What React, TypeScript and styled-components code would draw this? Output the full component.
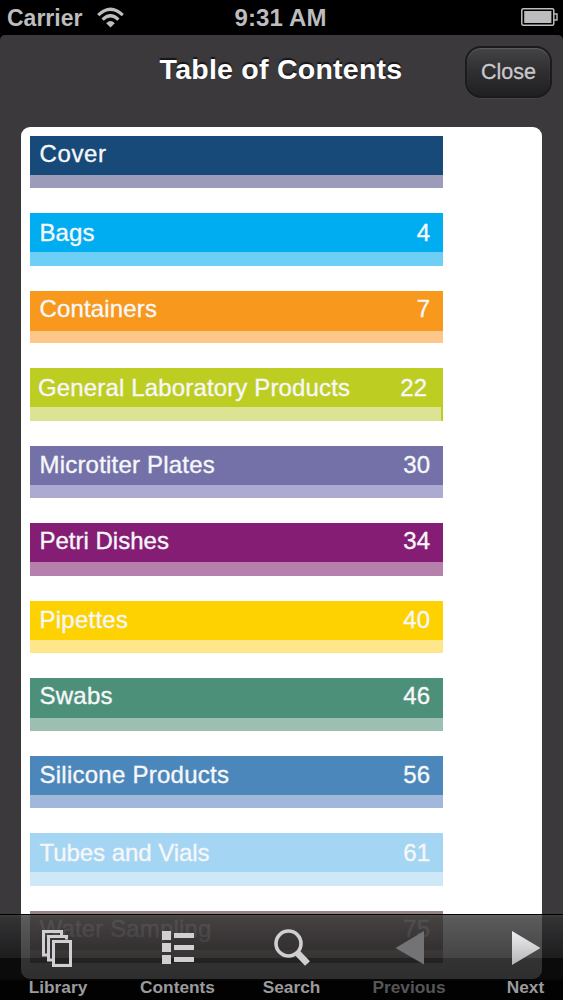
import React from 'react';
import styled, { createGlobalStyle } from 'styled-components';

const GlobalStyle = createGlobalStyle`
  * { box-sizing: border-box; }
  body { margin: 0; background: #000; font-family: "Liberation Sans", Arial, sans-serif; }
`;

const Screen = styled.div`
  position: relative;
  width: 563px;
  height: 1000px;
  overflow: hidden;
  background: #000;
  display: flex;
  flex-direction: column;
`;

const StatusBar = styled.header`
  height: 35px;
  flex: none;
  display: grid;
  grid-template-columns: 1fr auto 1fr;
  align-items: center;
  padding: 1px 5px 0 7px;
  color: #bdbcbe;
  font-size: 23px;
  font-weight: 700;
  line-height: 34px;
`;

const Carrier = styled.div`
  display: flex;
  align-items: center;
  gap: 15px;
  svg { margin-bottom: 2px; }
`;

const Clock = styled.span`
  font-size: 24px;
  letter-spacing: 0.15px;
  margin-right: 4px;
`;

const Battery = styled.div`
  display: flex;
  justify-content: flex-end;
  padding-bottom: 3px;
`;

const Page = styled.main`
  flex: 1;
  min-height: 0;
  background: #3b393c;
  border-radius: 5px 5px 0 0;
  display: flex;
  flex-direction: column;
`;

const TitleBar = styled.div`
  height: 91.5px;
  flex: none;
  display: grid;
  grid-template-columns: 1fr auto 1fr;
  align-items: start;
  padding: 10px 11px 0 10px;
`;

const Title = styled.h1`
  grid-column: 2;
  margin: 7px 0 0;
  font-size: 28.5px;
  line-height: 34px;
  letter-spacing: 0.25px;
  color: #fff;
  text-shadow: 0 -2px 1px #161517;
  white-space: nowrap;
`;

const CloseButton = styled.button`
  justify-self: end;
  width: 87px;
  height: 52px;
  margin-top: 1px;
  padding: 0;
  border: 2px solid #1b1a1c;
  border-radius: 16px;
  background: linear-gradient(#444345, #2f2e30 48%, #201f21);
  box-shadow: inset 0 1px 1px #5f5e60, 0 1px 0 #464447;
  color: #c9c8ca;
  font: 21.5px/47px "Liberation Sans", Arial, sans-serif;
  -webkit-text-stroke: 0.3px;
`;

const Card = styled.section`
  width: 521px;
  height: 852px;
  margin-left: 21px;
  padding: 9px 9px 0;
  border-radius: 9px;
  background: #fff;
  overflow: hidden;
`;

const Entry = styled.div<{ $band: string; $strip: string; $split: number; $edge: boolean }>`
  width: 413px;
  height: 52.5px;
  margin-bottom: 25px;
  background: linear-gradient(
    ${p => p.$band} ${p => p.$split}px,
    ${p => p.$strip} ${p => p.$split}px
  );
  border-right: ${p => (p.$edge ? `2px solid ${p.$band}` : 'none')};
`;

const EntryText = styled.div<{ $top: number; $left: number; $right: number; $color: string }>`
  display: flex;
  justify-content: space-between;
  padding: ${p => p.$top}px ${p => p.$right}px 0 ${p => p.$left}px;
  color: ${p => p.$color};
  font-size: 24px;
  line-height: 28px;
  -webkit-text-stroke: 0.35px;
`;

const Label = styled.span<{ $spacing: number }>`
  letter-spacing: ${p => p.$spacing}px;
  white-space: nowrap;
`;

const Toolbar = styled.nav`
  position: absolute;
  left: 0;
  right: 0;
  bottom: 0;
  height: 86px;
  border-top: 1px solid rgba(0, 0, 0, 0.75);
  background: linear-gradient(
    rgba(62, 62, 62, 0.8) 0,
    rgba(49, 49, 49, 0.8) 3px,
    rgba(22, 22, 23, 0.8) 43px,
    rgba(0, 0, 0, 0.8) 43px,
    rgba(0, 0, 0, 0.82) 64px,
    rgba(0, 0, 0, 0.96) 66px
  );
  display: grid;
  grid-template-columns: 116px 123px 105px 130px 1fr;
`;

const Tab = styled.div<{ $dim?: boolean }>`
  display: flex;
  flex-direction: column;
  align-items: center;
  color: ${p => (p.$dim ? '#565557' : '#9b9a9c')};
  font-size: 17.3px;
  font-weight: 700;
  line-height: 20px;
  white-space: nowrap;
  svg { display: block; margin: 13px 0 9px; }
  &:first-child svg { margin-right: 2px; }
  &:last-child { padding-left: 14px; }
`;

type Item = [label: string, page: string, band: string, strip: string, top?: number, spacing?: number, left?: number, right?: number];

const items: Item[] = [
  ['Cover', '', '#174979', '#9c9cba', 4, 0.6],
  ['Bags', '4', '#00adf0', '#6dcff6', 6, 0.1],
  ['Containers', '7', '#f8981d', '#fcc789', 4, 0.15],
  ['General Laboratory Products', '22', '#becd22', '#dce494', 6, 0.15, 8, 14],
  ['Microtiter Plates', '30', '#7470a8', '#acaad0', 5.4, 0.2],
  ['Petri Dishes', '34', '#851d74', '#b680ac', 4, 0],
  ['Pipettes', '40', '#fdd200', '#ffe68b', 5.4, 0.25],
  ['Swabs', '46', '#4c907a', '#9cbfb1', 4, 0.25],
  ['Silicone Products', '56', '#4c87bc', '#a1b8da', 5.4, 0.25],
  ['Tubes and Vials', '61', '#a4d5f3', '#cfe8f8', 6, -0.05],
  ['Water Sampling', '75', '#968482', '#b7aba9', 4, 0.15],
];

export default function App() {
  return (
    <Screen>
      <GlobalStyle />
      <StatusBar>
        <Carrier>
          <span>Carrier</span>
          <svg width="27" height="21" viewBox="0 0 27 21" fill="none" stroke="#bdbcbe" strokeWidth="3.2">
            <path d="M1.2 8.2Q13.5-3.8 25.8 8.2" />
            <path d="M5.6 12.6Q13.5 4.8 21.4 12.6" />
            <path d="M9.2 16.2Q13.5 11.7 17.8 16.2L13.5 20.5Z" fill="#bdbcbe" stroke="none" />
          </svg>
        </Carrier>
        <Clock>9:31 AM</Clock>
        <Battery>
          <svg width="37" height="18" viewBox="0 0 37 18">
            <rect x="0.8" y="0.8" width="32" height="16.4" rx="1.5" fill="none" stroke="#bdbcbe" strokeWidth="1.5" />
            <rect x="3.2" y="3" width="27.2" height="12" fill="#bdbcbe" />
            <path d="M33 6H36V12H33" fill="none" stroke="#bdbcbe" strokeWidth="1.4" />
          </svg>
        </Battery>
      </StatusBar>
      <Page>
        <TitleBar>
          <Title>Table of Contents</Title>
          <CloseButton>Close</CloseButton>
        </TitleBar>
        <Card>
          {items.map(([label, page, band, strip, top = 6, spacing = 0, left = 9.5, right = 13]) => (
            <Entry key={label} $band={band} $strip={strip} $split={label === 'Containers' || label === 'Swabs' ? 40 : 39} $edge={page === '22'}>
              <EntryText $top={top} $left={left} $right={right} $color={label === 'Water Sampling' ? '#d9d1d0' : '#f6f7f9'}>
                <Label $spacing={spacing}>{label}</Label>
                <span>{page}</span>
              </EntryText>
            </Entry>
          ))}
        </Card>
      </Page>
      <Toolbar>
        <Tab>
          <svg width="32" height="40" viewBox="0 0 32 40" fill="none" stroke="#d0cfd1" strokeWidth="3">
            <path d="M20.5 7V3.5H2.5V27H6M25.5 11.5V8.5H7.5V32H11" />
            <rect x="12.5" y="13.5" width="17" height="24" />
          </svg>
          Library
        </Tab>
        <Tab>
          <svg width="34" height="40" viewBox="0 0 34 40" fill="#d0cfd1">
            <path d="M1 3h9v9H1zM1 15h9v9H1zM1 27h9v9H1zM13 5h20v5H13zM13 17h20v5H13zM13 29h20v5H13z" />
          </svg>
          Contents
        </Tab>
        <Tab>
          <svg width="40" height="40" viewBox="0 0 40 40" fill="none" stroke="#d0cfd1">
            <circle cx="16.5" cy="15.5" r="12.5" strokeWidth="3.6" />
            <path d="M25 24.5L35.5 35.5" strokeWidth="6.8" />
          </svg>
          Search
        </Tab>
        <Tab $dim>
          <svg width="30" height="40" viewBox="0 0 30 40" fill="#737274">
            <path d="M1.5 20L30 3V36.5Z" />
          </svg>
          Previous
        </Tab>
        <Tab>
          <svg width="30" height="40" viewBox="0 0 30 40">
            <defs>
              <linearGradient id="next" x2="0" y2="1">
                <stop stopColor="#eeedef" />
                <stop offset="1" stopColor="#b5b4b6" />
              </linearGradient>
            </defs>
            <path d="M1 3L29.5 20L1 37Z" fill="url(#next)" />
          </svg>
          Next
        </Tab>
      </Toolbar>
    </Screen>
  );
}
